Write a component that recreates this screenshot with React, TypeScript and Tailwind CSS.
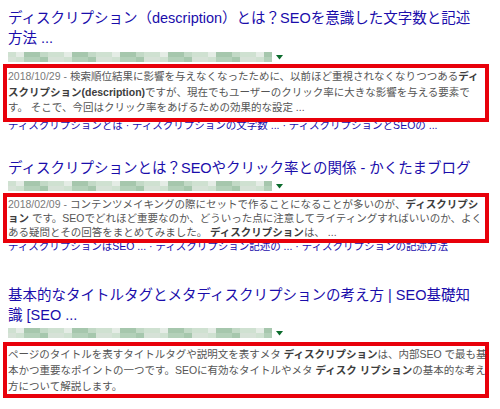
const shades = ['bg-[#cfe1d1]', 'bg-[#b3d0b9]', 'bg-[#e4ece5]', 'bg-[#a6c7ad]', 'bg-[#d6e2d7]', 'bg-[#c2d9c6]'];

function Blur({ cols }: { cols: number }) {
  return (
    <div className="flex items-center gap-[4px]">
      <div className="flex flex-col">
        {[0, 1].map((r) => (
          <div key={r} className="flex">
            {Array.from({ length: cols }).map((_, i) => (
              <div key={i} className={`h-[5px] w-[8px] ${shades[(i * 7 + r * 4 + ((i * i) % 3)) % 6]}`} />
            ))}
          </div>
        ))}
      </div>
      <svg width="7" height="5" viewBox="0 0 7 5">
        <path d="M0 0h7L3.5 4.5z" fill="#0a6b2c" />
      </svg>
    </div>
  );
}

function B({ children }: { children: React.ReactNode }) {
  return <b className="font-bold text-[#3d3d3d]">{children}</b>;
}

function Date({ d }: { d: string }) {
  return <span className="text-[#7a7a7a]">{d} - </span>;
}

export default function App() {
  return (
    <div className="h-[409px] w-[500px] overflow-hidden bg-white [font-family:'Liberation_Sans','Noto_Sans_CJK_JP',sans-serif]">
      {/* result 1 */}
      <div className="pt-[8px]">
        <div className="pl-[8px] text-[14.5px] leading-[20px] text-[#1a0dab]">
          <div className="whitespace-nowrap">ディスクリプション（description）とは？SEOを意識した文字数と記述</div>
          <div className="whitespace-nowrap">方法 ...</div>
        </div>
        <div className="mt-[4px] pl-[8px]">
          <Blur cols={33} />
        </div>
        <div className="relative z-10 ml-[3px] mt-[2px] h-[58px] w-[486px] border-4 border-[#e8000a] pl-[1px] pt-[1px] text-[10.5px] leading-[15.5px] text-[#555555]">
          <div className="whitespace-nowrap">
            <Date d="2018/10/29" />
            検索順位結果に影響を与えなくなったために、以前ほど重視されなくなりつつある<B>ディ</B>
          </div>
          <div className="whitespace-nowrap">
            <B>スクリプション(description)</B>ですが、現在でもユーザーのクリック率に大きな影響を与える要素で
          </div>
          <div className="whitespace-nowrap">す。 そこで、今回はクリック率をあげるための効果的な設定 ...</div>
        </div>
        <div className="-mt-[3px] whitespace-nowrap pl-[8px] text-[10.5px] leading-[13px] text-[#1a0dab]">
          ディスクリプションとは · ディスクリプションの文字数 ... · ディスクリプションとSEOの ...
        </div>
      </div>

      {/* result 2 */}
      <div className="mt-[26px]">
        <div className="whitespace-nowrap pl-[8px] text-[14.5px] leading-[20px] text-[#1a0dab]">
          ディスクリプションとは？SEOやクリック率との関係 - かくたまブログ
        </div>
        <div className="mt-[3px] pl-[8px]">
          <Blur cols={33} />
        </div>
        <div className="relative z-10 ml-[3px] mt-[2px] h-[50px] w-[486px] border-4 border-[#e8000a] pl-[1px] text-[10.5px] leading-[14px] text-[#555555]">
          <div className="whitespace-nowrap">
            <Date d="2018/02/09" />
            コンテンツメイキングの際にセットで作ることになることが多いのが、<B>ディスクリプシ</B>
          </div>
          <div className="whitespace-nowrap">
            <B>ョン</B> です。SEOでどれほど重要なのか、どういった点に注意してライティングすればいいのか、よく
          </div>
          <div className="whitespace-nowrap">
            ある疑問とその回答をまとめてみました。 <B>ディスクリプション</B>は、 ...
          </div>
        </div>
        <div className="-mt-[3px] whitespace-nowrap pl-[8px] text-[10.5px] leading-[13px] text-[#1a0dab]">
          ディスクリプションはSEO ... · ディスクリプション記述の ... · ディスクリプションの記述方法
        </div>
      </div>

      {/* result 3 */}
      <div className="mt-[32px]">
        <div className="pl-[8px] text-[14.5px] leading-[20px] text-[#1a0dab]">
          <div className="whitespace-nowrap">基本的なタイトルタグとメタディスクリプションの考え方 | SEO基礎知</div>
          <div className="whitespace-nowrap">識 [SEO ...</div>
        </div>
        <div className="mt-[3px] pl-[8px]">
          <Blur cols={33} />
        </div>
        <div className="relative z-10 ml-[3px] mt-[4px] h-[56px] w-[486px] border-4 border-[#e8000a] pl-[1px] text-[10.5px] leading-[16px] text-[#555555]">
          <div className="whitespace-nowrap">
            ページのタイトルを表すタイトルタグや説明文を表すメタ <B>ディスクリプション</B>は、内部SEO で最も基
          </div>
          <div className="whitespace-nowrap">
            本かつ重要なポイントの一つです。SEOに有効なタイトルやメタ <B>ディスク リプション</B>の基本的な考え
          </div>
          <div className="whitespace-nowrap">方について解説します。</div>
        </div>
      </div>
    </div>
  );
}
